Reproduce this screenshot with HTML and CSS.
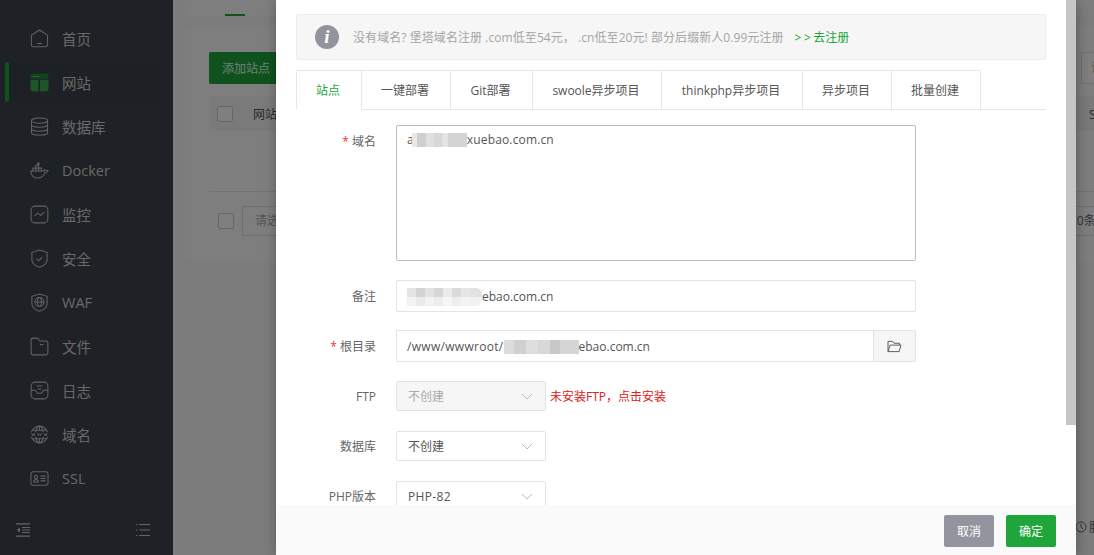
FILE: index.html
```html
<!DOCTYPE html>
<html lang="zh-CN">
<head>
<meta charset="utf-8">
<title>网站</title>
<link rel="stylesheet" href="styles.css">
</head>
<body>
<div class="app">
  <aside class="sidebar">
    <nav class="nav">
      <a class="nav-item"><svg class="ico" viewBox="0 0 20 20"><path d="M1.500 6.500 10 1l8.500 5.500v10a2.200 2.200 0 0 1-2.200 2.200H3.700a2.200 2.200 0 0 1-2.200-2.200z"/><path d="M7.500 15.300h5"/></svg><span>首页</span></a>
      <a class="nav-item active"><svg class="ico" viewBox="0 0 20 20"><path class="g1" d="M0.500 6V4a3.500 3.500 0 0 1 3.500-3.500h12A3.500 3.500 0 0 1 19.500 4v2z"/><path class="g2" d="M0.500 7h8.500v12.500H4A3.500 3.500 0 0 1 0.500 16zM10.500 7h9v9a3.500 3.500 0 0 1-3.500 3.500h-5.500z"/><path class="dots" d="M3.500 3.700h1M5.800 3.700h1M8.100 3.700h1"/></svg><span>网站</span></a>
      <a class="nav-item"><svg class="ico" viewBox="0 0 20 20"><ellipse cx="10" cy="3.800" rx="8.500" ry="2.800"/><path d="M1.500 3.800v12.400c0 1.600 3.800 2.800 8.500 2.800s8.500-1.200 8.500-2.800V3.800M1.500 8c0 1.600 3.800 2.800 8.500 2.800s8.500-1.200 8.500-2.800M1.500 12.200c0 1.600 3.800 2.800 8.500 2.800s8.500-1.200 8.500-2.800"/></svg><span>数据库</span></a>
      <a class="nav-item"><svg class="ico" viewBox="0 0 20 20"><path d="M1 10.500h13.200c.6-.1 1-.6 1-1.200.9.800 2.300.6 3.800.9-1 1.800-2.300 2-3.300 2.100C14.500 16 11.500 18 8 18c-4.500 0-7-3.300-7-7.500z"/><path d="M3 10.500V7.500h3v3M6 10.500V7.500h3v3M9 10.500V7.500h3v3M6 7.500V4.500h3v3M8 4.500V2h1.500v2.500"/></svg><span>Docker</span></a>
      <a class="nav-item"><svg class="ico" viewBox="0 0 20 20"><rect x="1.200" y="1.200" width="17.600" height="17.600" rx="4"/><path d="M4.800 11.500 8 8.500l3.200 2.400 4-3.600"/></svg><span>监控</span></a>
      <a class="nav-item"><svg class="ico" viewBox="0 0 20 20"><path d="M10 1 18 3.500v7.500c0 4-3.500 6.800-8 8.200-4.500-1.400-8-4.200-8-8.200V3.500z"/><path d="m6.800 10.200 2.300 2.200 4-3.800"/></svg><span>安全</span></a>
      <a class="nav-item"><svg class="ico" viewBox="0 0 20 20"><path d="M10 1 18 3.500v7.500c0 4-3.500 6.800-8 8.200-4.500-1.400-8-4.200-8-8.200V3.500z"/><circle cx="10" cy="9.500" r="4.800"/><ellipse cx="10" cy="9.500" rx="2" ry="4.800"/><path d="M5.200 9.500h9.600"/></svg><span>WAF</span></a>
      <a class="nav-item"><svg class="ico" viewBox="0 0 20 20"><path d="M1.200 3.500A2.300 2.300 0 0 1 3.500 1.200h4.300l2.800 3h6a2.200 2.200 0 0 1 2.200 2.200v10.200a2.200 2.200 0 0 1-2.200 2.200H3.500a2.300 2.300 0 0 1-2.300-2.300z"/><path d="M10.500 8h3.800"/></svg><span>文件</span></a>
      <a class="nav-item"><svg class="ico" viewBox="0 0 20 20"><rect x="1.200" y="1.200" width="17.600" height="17.600" rx="4"/><path d="M1.200 9.800h4.500L8 13h4l2.300-3.200h4.500M7 5.200h6M8 8.500h4"/></svg><span>日志</span></a>
      <a class="nav-item"><svg class="ico" viewBox="0 0 20 20"><circle cx="10" cy="10" r="8.800"/><ellipse cx="10" cy="10" rx="4" ry="8.800"/><path d="M2.500 5.500h15M2.500 14.500h15M10 1v4M10 15v4"/><rect class="band" x="0" y="7.600" width="20" height="4.800"/><path class="www" d="m1.800 8.400.8 3 .8-2 .8 2 .8-3M8 8.400l.8 3 1.200-2 1.200 2 .8-3M14.800 8.400l.8 3 .8-2 .8 2 .8-3"/></svg><span>域名</span></a>
      <a class="nav-item"><svg class="ico" viewBox="0 0 20 20"><rect x="1" y="3" width="18" height="14" rx="2.500"/><circle cx="6.300" cy="8.300" r="1.700"/><path d="M3.800 13.600c.3-1.800 1.300-2.500 2.500-2.500s2.200.7 2.500 2.500zM11 7.500h5.500M11 10h5.500M11 12.500h5.500"/></svg><span>SSL</span></a>
    </nav>
    <div class="side-foot">
      <svg class="foot-ico" viewBox="0 0 14 14"><path d="M0 .8h14M6 4.500h8M6 7h8M6 9.500h8M0 13.200h14"/><path class="fill" d="M4 4.500v5L.8 7z"/></svg>
      <svg class="foot-ico" viewBox="0 0 14 14"><path d="M3.200 1.500H14M3.200 7H14M3.200 12.500H14M0 1.500h1.400M0 7h1.400M0 12.500h1.400"/></svg>
    </div>
  </aside>
  <main class="main">
    <div class="top-card"><span class="top-tab"></span></div>
    <section class="card">
      <div class="toolbar">
        <button class="add-btn">添加站点</button>
        <span class="search">请输入</span>
      </div>
      <div class="thead">
        <span class="check"></span><span class="th">网站名</span><span class="th-end">SSL证书</span>
      </div>
      <div class="empty"></div>
      <div class="tfoot">
        <span class="check"></span>
        <span class="batch">请选择批量操作</span>
        <span class="pager">20条/页</span>
      </div>
    </section>
    <div class="help"><svg class="help-ico" viewBox="0 0 12 12"><circle cx="6" cy="6" r="5"/><path d="M6 3v3l2 2"/></svg><span>服务</span></div>
  </main>
</div>
<div class="mask"></div>
<div class="modal">
  <div class="modal-main">
    <div class="modal-body">
      <div class="notice">
        <span class="info">i</span>
        <span class="notice-text">没有域名? 堡塔域名注册 .com低至54元， .cn低至20元! 部分后缀新人0.99元注册</span>
        <a class="notice-link"><span class="arrows">&gt;&gt;</span>去注册</a>
      </div>
      <div class="tabs">
        <span class="tab on t1">站点</span>
        <span class="tab t2">一键部署</span>
        <span class="tab t3">Git部署</span>
        <span class="tab t4">swoole异步项目</span>
        <span class="tab t5">thinkphp异步项目</span>
        <span class="tab t6">异步项目</span>
        <span class="tab t7">批量创建</span>
      </div>
      <div class="row mb19">
        <label class="lab"><i>*</i> 域名</label>
        <div class="area">a<span class="mos mos-a"></span>xuebao.com.cn</div>
      </div>
      <div class="row mb18">
        <label class="lab">备注</label>
        <div class="inp w520"><span class="mos mos-b"></span>ebao.com.cn</div>
      </div>
      <div class="row mb19">
        <label class="lab"><i>*</i> 根目录</label>
        <div class="group">
          <div class="inp grow"><span class="path">/www/wwwroot/</span><span class="mos mos-c"></span>ebao.com.cn</div>
          <span class="folder"><svg viewBox="0 0 16 14"><path d="M1 12.500V1.500h5l1.500 2h6v2"/><path d="M1 12.500 3.300 5.500H15l-2 7z"/></svg></span>
        </div>
      </div>
      <div class="row row-sel mb20">
        <label class="lab">FTP</label>
        <div class="sel off">不创建<svg class="chev" viewBox="0 0 12 7"><path d="m1 1 5 5 5-5"/></svg></div>
        <a class="warn">未安装FTP，点击安装</a>
      </div>
      <div class="row row-sel mb20">
        <label class="lab">数据库</label>
        <div class="sel">不创建<svg class="chev" viewBox="0 0 12 7"><path d="m1 1 5 5 5-5"/></svg></div>
      </div>
      <div class="row row-sel mb20">
        <label class="lab">PHP版本</label>
        <div class="sel"><span class="php">PHP-82</span><svg class="chev" viewBox="0 0 12 7"><path d="m1 1 5 5 5-5"/></svg></div>
      </div>
    </div>
    <div class="scrollbar"><span class="thumb"></span></div>
  </div>
  <div class="modal-foot">
    <button class="btn grey">取消</button>
    <button class="btn green">确定</button>
  </div>
</div>
</body>
</html>
```
FILE: styles.css
```css
* { box-sizing: border-box; }
html, body { margin: 0; height: 100%; }
body {
  width: 1094px;
  height: 555px;
  overflow: hidden;
  position: relative;
  font-family: "Open Sans", "Noto Sans CJK SC", sans-serif;
  font-size: 12px;
  color: #555;
  background: #f8f8f8;
}
.app { display: flex; height: 555px; }

.sidebar {
  width: 173px;
  flex: none;
  background: #3c444d;
  display: flex;
  flex-direction: column;
  padding-top: 16px;
}
.nav { flex: 1; padding: 0 10px 0 5px; }
.nav-item {
  position: relative;
  display: flex;
  align-items: center;
  height: 44px;
  padding-left: 25px;
  gap: 13px;
  color: #d0d0d0;
  font-size: 14.500px;
  border-radius: 4px;
}
.nav-item.active { background: #3a4149; }
.nav-item.active::before {
  content: "";
  position: absolute;
  left: 0;
  top: 2px;
  width: 4px;
  height: 40px;
  border-radius: 3px;
  background: #20a53a;
}
.ico {
  width: 19px;
  height: 19px;
  flex: none;
  fill: none;
  stroke: #c4c4c4;
  stroke-width: 1.100;
}
.active .ico { stroke: none; }
.g1 { fill: #1f8a35; }
.g2 { fill: #3aa850; }
.active .ico .dots { stroke: #d8e8dc; stroke-width: 1; }
.band { fill: #3c444d; stroke: none; }
.www { stroke-width: .8; }
.side-foot {
  display: flex;
  justify-content: space-between;
  align-items: center;
  padding: 0 23px 18px 16px;
}
.foot-ico { width: 14px; height: 14px; fill: none; stroke: #c8c8c8; stroke-width: 1.200; }
.foot-ico .fill { fill: #c8c8c8; stroke: none; }

.main { flex: 1; min-width: 0; padding-left: 12px; position: relative; overflow: hidden; }
.top-card {
  height: 16px;
  background: #fdfdfd;
  border-radius: 0 0 0 6px;
  padding-left: 40px;
  display: flex;
  align-items: flex-end;
}
.top-tab { width: 20px; height: 2px; background: #20a53a; }
.card {
  margin-top: 12px;
  height: 232px;
  background: #fdfdfd;
  border-radius: 8px 0 0 8px;
  padding: 24px 0 0 24px;
}
.toolbar { display: flex; justify-content: space-between; height: 32px; }
.add-btn {
  width: 80px;
  height: 32px;
  border: 0;
  border-radius: 2px;
  padding: 0 0 0 13px;
  text-align: left;
  background: #20a53a;
  color: #dfe;
  font: inherit;
}
.search {
  width: 13px;
  border: 1px solid #ddd;
  border-right: 0;
  border-radius: 2px 0 0 2px;
  background: #fff;
  padding-left: 9px;
  line-height: 30px;
  color: #aaa;
  white-space: nowrap;
  overflow: hidden;
}
.thead {
  margin-top: 12px;
  height: 35px;
  background: #f5f5f5;
  display: flex;
  align-items: center;
  padding-left: 8px;
  color: #555;
}
.check { width: 16px; height: 16px; flex: none; border: 1px solid #ccc; border-radius: 2px; background: #fff; }
.th { margin-left: 20px; flex: 1; }
.th-end { flex: none; width: 5px; white-space: nowrap; overflow: hidden; }
.empty { height: 61px; border-bottom: 1px solid #e6e6e6; }
.tfoot { display: flex; align-items: center; height: 57px; padding-left: 9px; color: #aaa; }
.batch {
  margin-left: 8px;
  width: 120px;
  height: 30px;
  line-height: 28px;
  padding-left: 12px;
  border: 1px solid #ddd;
  border-radius: 2px;
  flex: none;
}
.pager {
  margin-left: auto;
  width: 34px;
  height: 30px;
  line-height: 28px;
  padding-left: 9px;
  border: 1px solid #ddd;
  border-right: 0;
  color: #666;
  white-space: nowrap;
  overflow: hidden;
}
.help {
  position: absolute;
  left: 902px;
  top: 518px;
  display: flex;
  align-items: center;
  gap: 2px;
  color: #666;
  white-space: nowrap;
}
.help-ico { width: 12px; height: 12px; fill: none; stroke: #666; }

.mask { position: absolute; inset: 0; background: rgba(0,0,0,.5); }
.modal {
  position: absolute;
  left: 276px;
  top: 0;
  width: 800px;
  height: 555px;
  background: #fff;
  display: flex;
  flex-direction: column;
  box-shadow: 1px 1px 12px rgba(0,0,0,.3);
}
.modal-main { flex: 1; min-height: 0; display: flex; }
.modal-body { width: 790px; flex: none; padding: 14px 20px 0; overflow: hidden; }
.scrollbar { width: 10px; flex: none; }
.thumb { display: block; height: 425px; background: #c6c6c6; }
.modal-foot {
  height: 50px;
  flex: none;
  background: #fafafa;
  display: flex;
  justify-content: flex-end;
  align-items: flex-start;
  gap: 12px;
  padding: 10px 20px 0 0;
}
.btn {
  width: 50px;
  height: 32px;
  border: 0;
  border-radius: 2px;
  padding: 0;
  color: #fff;
  font: inherit;
}
.grey { background: #92959d; }
.green { background: #20a53a; }

.notice {
  height: 46px;
  background: #f6f6f6;
  border: 1px solid #eeeef2;
  border-radius: 2px;
  display: flex;
  align-items: center;
  padding-left: 18px;
  color: #a5a5a5;
  white-space: pre;
}
.notice-text { letter-spacing: .065px; }
.info {
  width: 24px;
  height: 24px;
  border-radius: 50%;
  background: #92939c;
  color: #fff;
  font: italic bold 19px/24px "Liberation Serif", serif;
  text-align: center;
  flex: none;
  margin-right: 14px;
}
.notice-link { margin-left: 11px; color: #20a53a; }
.arrows { letter-spacing: 2.500px; }

.tabs {
  display: flex;
  height: 40px;
  margin-top: 10px;
  margin-bottom: 15px;
  border-bottom: 1px solid #e6e7ee;
}
.tab {
  height: 40px;
  display: flex;
  align-items: center;
  justify-content: center;
  padding-right: 2px;
  border: 1px solid #e6e7ee;
  border-left: 0;
  color: #555;
  background: #fff;
  white-space: nowrap;
}
.tab.on { color: #20a53a; border-left: 1px solid #e6e7ee; border-bottom-color: #fff; border-radius: 2px 0 0 0; }
.t1 { width: 66px; }
.t2 { width: 89px; }
.t3 { width: 82px; }
.t4 { width: 129px; }
.t5 { width: 141px; }
.t6 { width: 89px; }
.t7 { width: 89px; border-radius: 0 2px 0 0; }

.row { display: flex; align-items: flex-start; }
.mb18 { margin-bottom: 18px; }
.mb19 { margin-bottom: 19px; }
.mb20 { margin-bottom: 20px; }
.lab {
  width: 80px;
  height: 30px;
  flex: none;
  margin-right: 20px;
  text-align: right;
  line-height: 33px;
  color: #666;
}
.row-sel .lab { line-height: 31px; }
.lab i { color: #ef3434; font-style: normal; }
.area {
  width: 520px;
  height: 136px;
  border: 1px solid #bcbcc4;
  border-radius: 2px;
  padding: 5px 10px;
  line-height: 18px;
  letter-spacing: .15px;
  color: #555;
}
.inp {
  height: 32px;
  border: 1px solid #e2e3ea;
  border-radius: 2px;
  padding: 0 10px;
  line-height: 32px;
  color: #555;
  white-space: nowrap;
}
.path { letter-spacing: .3px; }
.w520 { width: 520px; }
.group { display: flex; width: 520px; }
.grow { flex: 1; border-right: 0; border-radius: 2px 0 0 2px; }
.folder {
  width: 43px;
  height: 32px;
  flex: none;
  background: #f6f6f6;
  border: 1px solid #e2e3ea;
  border-radius: 0 2px 2px 0;
  display: flex;
  align-items: center;
  justify-content: center;
}
.folder svg { width: 15px; height: 13px; fill: none; stroke: #555; stroke-width: 1; }
.sel {
  position: relative;
  width: 150px;
  height: 30px;
  border: 1px solid #e2e3ea;
  border-radius: 2px;
  padding-left: 11px;
  line-height: 30px;
  color: #555;
}
.off { background: #f6f6f6; color: #aaa; }
.php { letter-spacing: .35px; }
.chev {
  position: absolute;
  right: 12px;
  top: 11px;
  width: 12px;
  height: 7px;
  fill: none;
  stroke: #bbb;
  stroke-width: 1;
}
.warn { margin-left: 4px; height: 30px; line-height: 31px; color: #e02020; }

.mos { display: inline-block; vertical-align: middle; }
.mos-a {
  width: 55px;
  height: 14px;
  margin: -2px 0 0 -2px;
  background:
    linear-gradient(90deg, #e8e8e8 0 5px, #cfcfcf 5px 14px, #e0e0e0 14px 22px, #d8d8d8 22px 30px, #e4e4e4 30px 36px, #d4d4d4 36px 55px);
}
.mos-b {
  width: 75px;
  height: 18px;
  margin: -1px 0 0 0;
  border-radius: 0 6px 6px 0;
  background:
    linear-gradient(180deg, transparent 0 9px, rgba(255,255,255,.55) 9px 18px),
    linear-gradient(90deg, #e4e4e4 0 9px, #d2d2d2 9px 18px, #e2e2e2 18px 27px, #d6d6d6 27px 36px, #ebebeb 36px 45px, #dadada 45px 54px, #e6e6e6 54px 63px, #e2e2e2 63px 75px);
}
.mos-c {
  width: 75px;
  height: 14px;
  margin: -1px 0 0 0;
  background:
    linear-gradient(90deg, #dcdcdc 0 10px, #d0d0d0 10px 22px, #dedede 22px 34px, #d8d8d8 34px 46px, #c8c8c8 46px 56px, #d6d6d6 56px 75px);
}
```
